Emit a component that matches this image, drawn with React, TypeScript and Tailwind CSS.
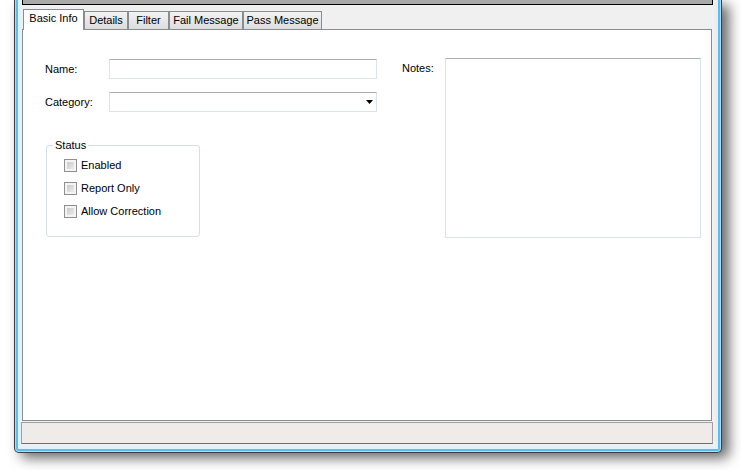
import type { ReactNode } from "react";

const tabs = [
  { label: "Basic Info", cls: "w-[61px] h-[21px] bg-white pb-[3px]", active: true },
  { label: "Details", cls: "w-[44px] h-[18px] mb-[1px]", active: false },
  { label: "Filter", cls: "w-[41px] h-[18px] mb-[1px]", active: false },
  { label: "Fail Message", cls: "w-[74px] h-[18px] mb-[1px]", active: false },
  { label: "Pass Message", cls: "w-[79px] h-[18px] mb-[1px]", active: false },
];

function Field({ label, children }: { label: string; children: ReactNode }) {
  return (
    <div className="flex items-center h-[20px]">
      <span className="w-[64px]">{label}</span>
      {children}
    </div>
  );
}

function Check({ label }: { label: string }) {
  return (
    <div className="flex items-center h-[23px] pl-[17px] gap-[4px]">
      <div className="w-[13px] h-[13px] border border-[#8f8f8f] bg-[#f4f4f4] p-[2px]">
        <div className="w-full h-full bg-gradient-to-br from-[#c9c9c9] to-[#ececec]" />
      </div>
      <span>{label}</span>
    </div>
  );
}

export default function App() {
  return (
    <div className="w-[741px] h-[470px] bg-white overflow-hidden font-['Liberation_Sans',Arial,sans-serif] text-[11px] leading-[13px] text-black">
      {/* window frame */}
      <div className="ml-[14px] w-[708px] h-[453px] border-x border-b border-[#3c3f44] rounded-b-[5px] bg-[#b7d6ef] px-[1px] pb-[1px] shadow-[7px_5px_13px_rgba(0,0,0,0.6)]">
        <div className="h-full border-x-2 border-b-2 border-[#58bfee] rounded-b-[3px] bg-[#e2f0fb] px-[3px] pb-[3px]">
          <div className="h-full bg-[#f0f0f0] flex flex-col">
            {/* bottom of the control above */}
            <div className="ml-[1px] w-[691px] h-[5px] bg-[#a9a9a9] border-x border-b border-black" />
            <div className="h-[4px]" />

            {/* tabs */}
            <div className="flex items-end h-[21px] ml-[2px] relative z-10">
              {tabs.map((t) => (
                <div
                  key={t.label}
                  className={
                    "flex items-center justify-center border-x border-t border-[#898c95] " +
                    t.cls +
                    (t.active ? "" : " bg-gradient-to-b from-[#f3f3f3] to-[#dcdcdc]")
                  }
                >
                  {t.label}
                </div>
              ))}
            </div>

            {/* tab page */}
            <div className="-mt-[1px] ml-[1px] w-[690px] h-[392px] bg-white border border-[#898c95] pt-[28px] pl-[22px] flex">
              <div className="w-[332px]">
                <div className="mt-[1px]">
                  <Field label="Name:">
                    <div className="w-[268px] h-[20px] border border-[#dde3ea] border-t-[#abadb3]" />
                  </Field>
                </div>
                <div className="mt-[13px]">
                  <Field label="Category:">
                    <div className="w-[268px] h-[20px] border border-[#dde3ea] border-t-[#abadb3] flex items-center justify-end pr-[3px]">
                      <svg width="7" height="4" viewBox="0 0 7 4">
                        <path d="M0 0h7L3.5 4z" fill="#000" />
                      </svg>
                    </div>
                  </Field>
                </div>

                <div className="relative mt-[33px] ml-[1px] w-[154px] h-[92px] border border-[#d5dfe5] rounded-[3px] pt-[8px]">
                  <span className="absolute -top-[7px] left-[6px] bg-white px-[2px]">Status</span>
                  <Check label="Enabled" />
                  <Check label="Report Only" />
                  <Check label="Allow Correction" />
                </div>
              </div>

              <div className="ml-[25px] flex">
                <span className="w-[43px] pt-[4px]">Notes:</span>
                <div className="w-[256px] h-[180px] border border-[#dde3ea] border-t-[#abadb3]" />
              </div>
            </div>

            {/* status strip */}
            <div className="mt-[1px] w-[692px] h-[22px] bg-[#efebe9] border border-[#a0a0a0] border-b-[#6f6f6f]" />
          </div>
        </div>
      </div>
    </div>
  );
}
